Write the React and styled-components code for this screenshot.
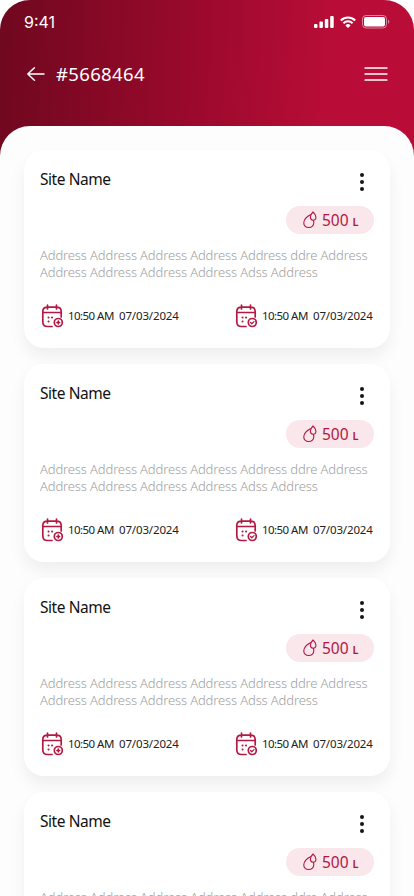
import React from 'react'
import styled, { createGlobalStyle } from 'styled-components'

const GlobalStyle = createGlobalStyle`
* { box-sizing: border-box; }
body {
  margin: 0;
  background: #fff;
  font-family: "Noto Sans", "Open Sans", sans-serif;
}
`
const Screen = styled.div`
width: 414px;
height: 896px;
overflow: hidden;
border-radius: 30px 30px 0 0;
background: linear-gradient(93deg, #6f081f 0%, #9b092c 47%, #b90d37 80%, #b90d37 100%) 0 0 / 100% 170px no-repeat;
`
const StatusBar = styled.div`
height: 44px;
padding: 0 24px 0 24px;
display: flex;
align-items: center;
justify-content: space-between;
color: #fff;
`
const Clock = styled.span`
font-family: Inter, sans-serif;
font-size: 16px;
font-weight: 400;
letter-spacing: 0;
`
const StatusIcons = styled.div`
display: flex;
align-items: center;
gap: 6px;
`
const Header = styled.header`
height: 82px;
padding: 17px 26px 0 26px;
display: flex;
align-items: flex-start;
color: #fff;
svg { flex: none; }
`
const OrderId = styled.h1`
margin: 0 auto 0 10px;
font-size: 18.5px;
line-height: 26px;
font-weight: 400;
letter-spacing: 0.35px;
`
const Sheet = styled.main`
height: 770px;
padding: 24px;
display: flex;
flex-direction: column;
gap: 16px;
overflow: hidden;
border-radius: 30px 30px 0 0;
background: #fdfdfd;
`
const Card = styled.article`
flex: none;
height: 198px;
padding: 16px 16px 0;
border-radius: 20px;
background: #fff;
box-shadow: 0 9px 16px rgba(0, 0, 0, 0.06);
`
const CardTop = styled.div`
height: 40px;
display: flex;
justify-content: space-between;
`
const SiteName = styled.h2`
margin: 0;
font-size: 15.5px;
line-height: 26px;
font-weight: 400;
letter-spacing: -0.45px;
color: #111;
`
const MoreButton = styled.button`
width: 24px;
height: 32px;
padding: 0;
border: 0;
background: none;
display: flex;
align-items: center;
justify-content: center;
`
const Volume = styled.div`
width: 88px;
height: 28px;
margin-left: auto;
padding-left: 17px;
display: flex;
align-items: center;
border-radius: 14px;
background: #fae7eb;
color: #b31640;
font-size: 15.5px;
letter-spacing: 0;
`
const Amount = styled.span`
margin: 0 4px 0 5px;
`
const Unit = styled.span`
font-size: 11px;
font-weight: 600;
padding-top: 3px;
`
const Address = styled.p`
margin: 13px 0 0;
height: 34px;
font-size: 13px;
font-weight: 300;
line-height: 17px;
letter-spacing: -0.13px;
white-space: nowrap;
color: #a0a0a0;
`
const Dates = styled.div`
margin-top: 22px;
display: flex;
justify-content: space-between;
`
const DateItem = styled.div`
width: 140px;
height: 26px;
display: flex;
align-items: center;
gap: 4px;
font-size: 11.5px;
line-height: 16px;
white-space: nowrap;
color: #222;
svg { flex: none; }
`
const Time = styled.time`
width: 47px;
letter-spacing: -0.55px;
`
const Day = styled.time`
letter-spacing: -0.15px;
`

const SignalIcon = () => (
    <svg width="20" height="13" viewBox="0 0 20 13" fill="#fff">
        <rect x="0" y="8" width="3.5" height="4" rx="1" />
        <rect x="5.4" y="5.5" width="3.5" height="6.5" rx="1" />
        <rect x="10.8" y="3" width="3.5" height="9" rx="1" />
        <rect x="16.2" y="0" width="3.5" height="12" rx="1" />
    </svg>
)

const WifiIcon = () => (
    <svg width="16" height="13" viewBox="0 0 16 13" fill="none" stroke="#fff" strokeWidth="2">
        <path d="M.8 4.5a10.2 10.2 0 0 1 14.4 0M3.4 7.2a6.5 6.5 0 0 1 9.2 0" />
        <path d="M5.4 9.4a3.7 3.7 0 0 1 5.2 0L8 12Z" fill="#fff" stroke="none" />
    </svg>
)

const BatteryIcon = () => (
    <svg width="28" height="14" viewBox="0 0 28 14">
        <rect x=".5" y=".5" width="24" height="12.5" rx="3.5" fill="none" stroke="#fff" opacity=".5" />
        <rect x="2" y="2" width="21" height="9.5" rx="2" fill="#fff" />
        <path d="M26 4.7v4c1.8-.7 1.8-3.3 0-4Z" fill="#fff" opacity=".5" />
    </svg>
)

const BackIcon = () => (
    <svg width="20" height="26" viewBox="0 0 20 26" fill="none" stroke="#fff" strokeWidth="1.5" strokeLinecap="round" strokeLinejoin="round">
        <path d="M18 13H1.8m6.6-6.3L1.8 13l6.6 6.3" />
    </svg>
)

const MenuIcon = () => (
    <svg width="24" height="26" viewBox="0 0 24 26" fill="none" stroke="#fff" strokeWidth="1.7" strokeLinecap="round">
        <path d="M1.2 7h21.6M1.2 13h21.6M1.2 19h21.6" />
    </svg>
)

const DropsIcon = () => (
    <svg width="14" height="18" viewBox="0 0 14 18" fill="none" stroke="#b31640" strokeWidth="1.1" strokeLinejoin="round">
        <path d="M7.9 3.4C4.1 5.2 1 8.7.8 11.7c-.2 2.8 1.9 4.8 4.9 4.8 3.1 0 5.2-2.1 5.1-4.9 0-.9-.2-1.7-.5-2.4" />
        <path d="M10 1c-1.5 1.5-2.7 3.5-2.6 5.2.1 1.7 1.2 3 2.8 3 1.7 0 2.9-1.3 2.7-3.1C12.8 4.4 11.6 2.4 10 1Z" />
    </svg>
)

const CalendarIcon = ({ done }) => (
    <svg width="24" height="26" viewBox="0 0 24 26" fill="none" stroke="#b31a43" strokeWidth="1.7" strokeLinecap="round" strokeLinejoin="round">
        <path d="M12 23.5H7.5Q2.8 23.5 2.8 18.8V8.5Q2.8 4.2 7.5 4.2h9Q21.2 4.2 21.2 8.5V14M3 9.5h18M7.5 2v4M16.5 2v4" />
        <path d="M8.5 14.5h.1M12 14.5h.1M8.5 18.5h.1" strokeWidth="2" />
        <circle cx="18.3" cy="19.5" r="4" />
        {done ? <path d="m16.6 19.5 1.2 1.2 2.2-2.1" strokeWidth="1.3" /> : <path d="M18.3 18.2v2.6M17 19.5h2.6" />}
    </svg>
)

const MoreIcon = () => (
    <svg width="4" height="18" viewBox="0 0 4 18" fill="#151515">
        <circle cx="2" cy="2" r="2" />
        <circle cx="2" cy="9" r="2" />
        <circle cx="2" cy="16" r="2" />
    </svg>
)

const SiteCard = ({ site }) => (
    <Card>
        <CardTop>
            <SiteName>{site.name}</SiteName>
            <MoreButton><MoreIcon /></MoreButton>
        </CardTop>
        <Volume><DropsIcon /><Amount>{site.volume}</Amount><Unit>L</Unit></Volume>
        <Address>{site.address[0]}<br />{site.address[1]}</Address>
        <Dates>
            {site.dates.map(({ time, day, done }, index) => (
                <DateItem key={index}>
                    <CalendarIcon done={done} />
                    <Time>{time}</Time>
                    <Day>{day}</Day>
                </DateItem>
            ))}
        </Dates>
    </Card>
)

const site = {
    name: 'Site Name',
    volume: 500,
    address: [
        'Address Address Address Address Address ddre Address',
        'Address Address Address Address Adss Address',
    ],
    dates: [
        { time: '10:50 AM', day: '07/03/2024', done: false },
        { time: '10:50 AM', day: '07/03/2024', done: true },
    ],
}
const sites = [site, site, site, site]

export default function App() {
    return (
        <Screen>
            <GlobalStyle />
            <StatusBar>
                <Clock>9:41</Clock>
                <StatusIcons><SignalIcon /><WifiIcon /><BatteryIcon /></StatusIcons>
            </StatusBar>
            <Header>
                <BackIcon />
                <OrderId>#5668464</OrderId>
                <MenuIcon />
            </Header>
            <Sheet>
                {sites.map((item, index) => <SiteCard key={index} site={item} />)}
            </Sheet>
        </Screen>
    )
}
